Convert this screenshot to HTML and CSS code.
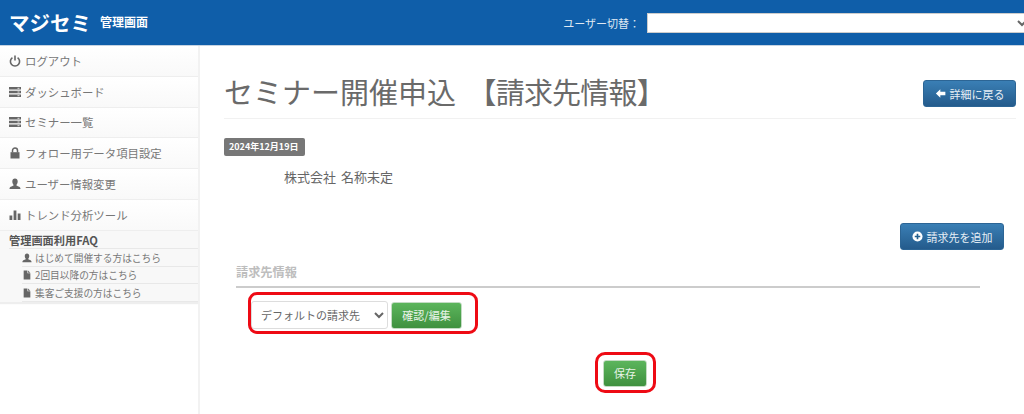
FILE: index.html
```html
<!DOCTYPE html>
<html lang="ja">
<head>
<meta charset="utf-8">
<title>セミナー開催申込</title>
<link rel="stylesheet" href="styles.css">
</head>
<body>
<svg class="defs" width="0" height="0" aria-hidden="true">
  <symbol id="i-power" viewBox="0 0 12 12"><path d="M3.4 2.6a4.6 4.6 0 1 0 5.2 0" fill="none" stroke="currentColor" stroke-width="1.6"/><path d="M6 .6v5" stroke="currentColor" stroke-width="1.6"/></symbol>
  <symbol id="i-server" viewBox="0 0 12 12"><path d="M0 1h12v2.6H0zM0 4.7h12v2.6H0zM0 8.4h12V11H0z" fill="currentColor"/><path d="M8.5 2.3h2M8.5 6h2M8.5 9.7h2" stroke="#fff" stroke-width=".8"/></symbol>
  <symbol id="i-lock" viewBox="0 0 12 12"><path d="M1.5 5.2h9V11.5h-9z" fill="currentColor"/><path d="M3.5 5.5V3.6a2.5 2.5 0 0 1 5 0v1.900" fill="none" stroke="currentColor" stroke-width="1.5"/></symbol>
  <symbol id="i-user" viewBox="0 0 12 12"><path d="M6 .6c1.700 0 2.700 1.300 2.700 3S7.700 6.700 7.300 7.300c.5 1 4.200 1 4.200 3.700H.5c0-2.700 3.700-2.700 4.200-3.700C4.300 6.700 3.300 5.300 3.300 3.600S4.300.6 6 .6z" fill="currentColor"/></symbol>
  <symbol id="i-chart" viewBox="0 0 12 12"><path d="M.5 6.500h2.800V11H.5zM4.600 1.500h2.800V11H4.600zM8.700 4.500h2.800V11H8.700z" fill="currentColor"/></symbol>
  <symbol id="i-file" viewBox="0 0 12 12"><path d="M2 .5h4.500V4H10v7.500H2zM7.300.5 10 3.200H7.300z" fill="currentColor"/></symbol>
  <symbol id="i-left" viewBox="0 0 12 12"><path d="M5.800 1.300 1 6l4.800 4.700V7.900H11.300V4.100H5.800z" fill="currentColor"/></symbol>
  <symbol id="i-plus" viewBox="0 0 12 12"><circle cx="6" cy="6" r="5.500" fill="currentColor"/><path d="M6 3v6M3 6h6" stroke="#24608f" stroke-width="1.800"/></symbol>
</svg>

<header class="topbar">
  <div class="brand">
    <span class="brand-name">マジセミ</span>
    <span class="brand-sub">管理画面</span>
  </div>
  <div class="switcher">
    <label class="switcher-label" for="user">ユーザー切替：</label>
    <select class="switcher-select" id="user"><option></option></select>
  </div>
</header>

<div class="layout">
  <nav class="sidebar">
    <a class="nav-item"><svg class="ico"><use href="#i-power"/></svg>ログアウト</a>
    <a class="nav-item"><svg class="ico"><use href="#i-server"/></svg>ダッシュボード</a>
    <a class="nav-item"><svg class="ico"><use href="#i-server"/></svg>セミナー一覧</a>
    <a class="nav-item"><svg class="ico"><use href="#i-lock"/></svg>フォロー用データ項目設定</a>
    <a class="nav-item"><svg class="ico"><use href="#i-user"/></svg>ユーザー情報変更</a>
    <a class="nav-item"><svg class="ico"><use href="#i-chart"/></svg>トレンド分析ツール</a>
    <div class="faq">
      <div class="faq-title">管理画面利用FAQ</div>
      <a class="faq-item"><svg class="ico-sm"><use href="#i-user"/></svg>はじめて開催する方はこちら</a>
      <a class="faq-item"><svg class="ico-sm"><use href="#i-file"/></svg>2回目以降の方はこちら</a>
      <a class="faq-item"><svg class="ico-sm"><use href="#i-file"/></svg>集客ご支援の方はこちら</a>
    </div>
  </nav>

  <main class="content">
    <div class="page-head">
      <h1 class="page-title">セミナー開催申込 <span class="page-title-sub">【請求先情報】</span></h1>
      <a class="btn btn-blue btn-back"><svg class="ico-btn"><use href="#i-left"/></svg>詳細に戻る</a>
    </div>
    <div class="date-row"><span class="badge">2024年12月19日</span></div>
    <p class="company">株式会社 名称未定</p>
    <div class="add-row">
      <a class="btn btn-blue btn-add"><svg class="ico-btn"><use href="#i-plus"/></svg>請求先を追加</a>
    </div>
    <section class="billing">
      <h2 class="billing-title">請求先情報</h2>
      <div class="billing-row">
        <select class="billing-select"><option>デフォルトの請求先</option></select>
        <a class="btn btn-green btn-edit">確認/編集</a>
        <span class="ring ring-row"></span>
      </div>
      <div class="save-row">
        <div class="save-wrap">
          <a class="btn btn-green btn-save">保存</a>
          <span class="ring ring-save"></span>
        </div>
      </div>
    </section>
  </main>
</div>
</body>
</html>
```

FILE: styles.css
```css
* { box-sizing: border-box; }
html, body { margin: 0; height: 414px; overflow: hidden; }
body {
  font-family: "Noto Sans CJK JP", "Liberation Sans", sans-serif;
  color: #666;
  background: #fff;
  display: flex;
  flex-direction: column;
}
.defs { position: absolute; }

.topbar {
  height: 46px;
  flex: none;
  background: #0f5ea9;
  border-bottom: 1px solid #c5d3e2;
  display: flex;
  align-items: center;
  justify-content: space-between;
  padding-left: 9px;
}
.brand { display: flex; align-items: center; gap: 9px; color: #fff; font-weight: 700; }
.brand-name { font-size: 20.5px; line-height: 1; }
.brand-sub { font-size: 12px; line-height: 1; margin-bottom: 1px; }
.switcher { display: flex; align-items: center; gap: 7px; margin-right: -7px; }
.switcher-label { color: #dfe8f2; font-size: 11px; }
.switcher-select {
  width: 384px;
  height: 20px;
  background: #fff;
  border: 1px solid #ccc;
  border-radius: 0;
  padding: 0;
  font-size: 11px;
  color: #666;
}

.layout { flex: 1; display: flex; min-height: 0; }

.sidebar { width: 200px; flex: none; border-right: 2px solid #f2f2f2; }
.nav-item {
  height: 30.8px;
  display: flex;
  align-items: center;
  padding-left: 9px;
  font-size: 11.4px;
  color: #777;
  border-bottom: 1px solid #eee;
  background: linear-gradient(#fff, #f9f9f9);
}
.ico { width: 12px; height: 12px; margin-right: 4px; flex: none; color: #666; }
.faq {
  background: #f8f8f8;
  border-bottom: 1px solid #eee;
  box-shadow: 0 1px 1px #eee;
}
.faq-title {
  height: 18.5px;
  margin-left: 9px;
  font-size: 11.2px;
  font-weight: 700;
  color: #555;
  line-height: 18px;
  border-bottom: 1px solid #e8e8e8;
}
.faq-item {
  height: 17.6px;
  margin-left: 22px;
  display: flex;
  align-items: center;
  font-size: 9.7px;
  color: #777;
  border-bottom: 1px solid #e8e8e8;
}
.ico-sm { width: 10px; height: 10px; margin-right: 3px; flex: none; color: #666; }

.content { flex: 1; padding: 0 8px 0 24px; min-width: 0; }
.page-head {
  height: 73px;
  border-bottom: 1px solid #f1f1f1;
  display: flex;
  align-items: flex-start;
  justify-content: space-between;
}
.page-title {
  margin: 23px 0 0;
  font-size: 29px;
  font-weight: 400;
  line-height: 44px;
  color: #6a6a6a;
}
.page-title-sub { margin-left: 5px; letter-spacing: -0.8px; }
.btn {
  display: inline-flex;
  align-items: center;
  justify-content: center;
  border-radius: 3px;
  color: #e6eef5;
  font-size: 11px;
  white-space: nowrap;
}
.btn-blue {
  background: linear-gradient(#3a7fb5, #245b8c);
  border: 1px solid #2c6595;
}
.btn-green {
  background: linear-gradient(#5cb55c, #3f913f);
  border: 1px solid #c4dcc4;
  color: #e9f4e9;
}
.ico-btn { width: 11px; height: 11px; margin-right: 4px; color: #fff; }
.btn-back { width: 93px; height: 27px; margin-top: 34px; }
.date-row { margin-top: 19px; height: 18px; display: flex; }
.badge {
  background: #777;
  color: #fff;
  font-size: 9px;
  font-weight: 700;
  border-radius: 2px;
  padding: 0 5px;
  line-height: 18px;
  width: 81px;
  white-space: nowrap;
}
.company { margin: 12px 0 0 60px; font-size: 13px; line-height: 18px; color: #666; word-spacing: 2px; }
.add-row { margin-top: 37px; display: flex; justify-content: flex-end; padding-right: 12px; }
.btn-add { width: 104px; height: 27px; }

.billing { margin: 13px 0 0 12px; width: 744px; }
.billing-title {
  margin: 0;
  height: 25px;
  font-size: 12.2px;
  line-height: 18px;
  font-weight: 700;
  color: #bdbdbd;
  border-bottom: 2px solid #ccc;
}
.billing-row {
  position: relative;
  display: flex;
  align-items: center;
  gap: 3px;
  margin: 13px 0 0 15px;
  height: 28px;
}
.billing-select {
  width: 137px;
  height: 28px;
  background: #fff;
  border: 1px solid #ddd;
  border-radius: 3px;
  padding-left: 5px;
  font-family: inherit;
  font-size: 11px;
  color: #666;
}
.btn-edit { width: 71px; height: 27px; }
.save-row { margin-top: 30px; display: flex; padding-left: 367px; }
.save-wrap { position: relative; }
.btn-save { width: 44px; height: 27px; }
.ring {
  position: absolute;
  border: 3px solid #ee0a14;
  pointer-events: none;
}
.ring-row { left: -3px; top: -9px; width: 230px; height: 42px; border-radius: 9px; }
.ring-save { left: -8px; top: -7px; width: 61px; height: 41px; border-radius: 10px; }
```
